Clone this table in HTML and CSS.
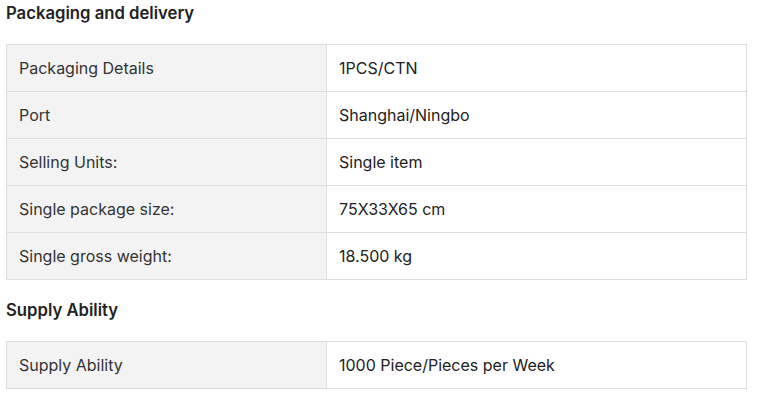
FILE: index.html
```html
<!DOCTYPE html>
<html>
<head>
<meta charset="utf-8">
<link rel="stylesheet" href="styles.css">
</head>
<body>
<div class="page">
  <h2 class="title first">Packaging and delivery</h2>
  <table class="attrs">
    <tr><td class="k">Packaging Details</td><td class="v">1PCS/CTN</td></tr>
    <tr><td class="k">Port</td><td class="v">Shanghai/Ningbo</td></tr>
    <tr><td class="k">Selling Units:</td><td class="v">Single item</td></tr>
    <tr><td class="k">Single package size:</td><td class="v">75X33X65 cm</td></tr>
    <tr><td class="k">Single gross weight:</td><td class="v">18.500 kg</td></tr>
  </table>
  <h2 class="title">Supply Ability</h2>
  <table class="attrs">
    <tr><td class="k">Supply Ability</td><td class="v">1000 Piece/Pieces per Week</td></tr>
  </table>
</div>
</body>
</html>
```
FILE: styles.css
```css
html, body {
  margin: 0;
  padding: 0;
  background: #fff;
}
.page {
  padding: 0 0 0 6px;
  font-family: Inter, "Noto Sans", sans-serif;
  color: #222;
}
.title {
  margin: 0;
  font-size: 16.7px;
  font-weight: 600;
  line-height: 26px;
  color: #222;
}
.title.first {
  margin-bottom: 18px;
}
.attrs + .title {
  margin-top: 17px;
  margin-bottom: 18px;
}
.attrs {
  border-collapse: collapse;
  width: 741px;
  table-layout: fixed;
}
.attrs td {
  border: 1px solid #ddd;
  height: 47px;
  padding: 0 12px;
  font-size: 16px;
  color: #222;
  box-sizing: border-box;
  vertical-align: middle;
}
.attrs td.k {
  width: 320px;
  background: #f3f3f3;
  color: #333;
}
.attrs td.v {
  background: #fff;
}
```
